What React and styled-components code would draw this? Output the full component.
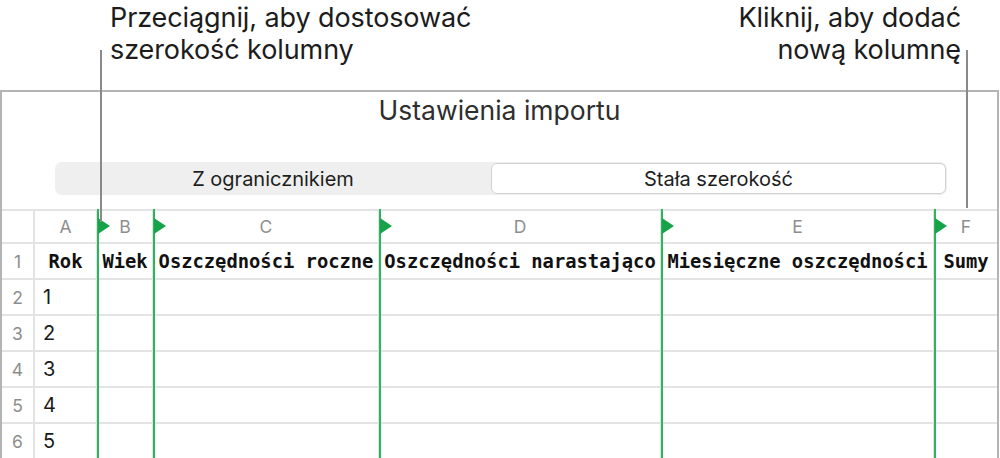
import React from 'react';
import styled, { createGlobalStyle } from 'styled-components';

const GlobalStyle = createGlobalStyle`
  body {
    margin: 0;
    background: #ffffff;
    font-family: Inter, "Noto Sans", sans-serif;
  }
`;

const COLUMNS = [
  { letter: '', width: 33 },
  { letter: 'A', width: 63 },
  { letter: 'B', width: 56, marked: true },
  { letter: 'C', width: 226, marked: true },
  { letter: 'D', width: 282, marked: true },
  { letter: 'E', width: 273, marked: true },
  { letter: 'F', width: 62, marked: true },
];

const HEADINGS = ['Rok', 'Wiek', 'Oszczędności roczne', 'Oszczędności narastająco', 'Miesięczne oszczędności', 'Sumy'];
const YEARS = ['1', '2', '3', '4', '5'];

const template = COLUMNS.map((c) => `${c.width}px`).join(' ');

const Page = styled.div`
  position: relative;
  width: 1000px;
  height: 458px;
  overflow: hidden;
`;

const Callouts = styled.div`
  display: flex;
  justify-content: space-between;
  height: 90px;
  padding: 2px 39px 0 110px;
  box-sizing: border-box;
`;

const Callout = styled.div`
  font-size: 27px;
  line-height: 32px;
  color: #1c1c1c;
  text-align: ${(p) => (p.$right ? 'right' : 'left')};
  letter-spacing: -0.1px;
`;

const Leader = styled.div`
  position: absolute;
  left: ${(p) => p.$x}px;
  top: 50px;
  height: ${(p) => p.$h}px;
  width: 2px;
  background: #8a8a8a;
  z-index: 3;
`;

const Panel = styled.div`
  width: 999px;
  box-sizing: border-box;
  border: 2px solid #b4b4b4;
  border-bottom: none;
  height: 368px;
`;

const Title = styled.div`
  text-align: center;
  font-size: 26.5px;
  line-height: 32px;
  color: #2e2e2e;
  padding-top: 2px;
`;

const Segmented = styled.div`
  display: grid;
  grid-template-columns: 436px 1fr;
  margin: 36px 0 0 53px;
  width: 892px;
  height: 33px;
  box-sizing: border-box;
  background: #efefef;
  border-radius: 7px;
  padding: 1px 1px 1px 0;
`;

const Segment = styled.div`
  display: flex;
  align-items: center;
  justify-content: center;
  font-size: 20px;
  color: #1e1e1e;
  border-radius: 6px;
  background: ${(p) => (p.$active ? '#ffffff' : 'transparent')};
  border: 1px solid ${(p) => (p.$active ? '#d2d2d2' : 'transparent')};
`;

const Grid = styled.div`
  position: relative;
  margin-top: 14px;
  border-top: 2px solid #e3e3e3;
`;

const Row = styled.div`
  display: grid;
  grid-template-columns: ${template};
  height: ${(p) => (p.$header ? 31 : 34)}px;
  border-bottom: 2px solid #e3e3e3;
`;

const Cell = styled.div`
  display: flex;
  align-items: center;
  justify-content: ${(p) => (p.$left ? 'flex-start' : 'center')};
  padding-left: ${(p) => (p.$left ? 8 : 0)}px;
  border-right: 2px solid #e3e3e3;
  white-space: nowrap;
  overflow: visible;
  &:last-child {
    border-right: none;
  }
`;

const Letter = styled(Cell)`
  font-size: 17.5px;
  color: #8e8e8e;
`;

const Heading = styled(Cell)`
  font-family: "DejaVu Sans Mono", "Liberation Mono", monospace;
  font-weight: bold;
  font-size: 18.8px;
  color: #111111;
`;

const Value = styled(Cell)`
  font-size: 20px;
  color: #1a1a1a;
`;

const Marker = styled.div`
  position: absolute;
  top: -2px;
  bottom: -260px;
  width: 2px;
  background: #2bb55e;
  z-index: 2;
  &::after {
    content: '';
    position: absolute;
    left: 1px;
    top: 9px;
    border-left: 12px solid #17a34a;
    border-top: 8.5px solid transparent;
    border-bottom: 8.5px solid transparent;
  }
`;

const markerOffsets = COLUMNS.reduce((acc, col, i) => {
  const start = COLUMNS.slice(0, i).reduce((s, c) => s + c.width, 0);
  if (col.marked) acc.push(start - 1);
  return acc;
}, []);

export default function App() {
  return (
    <Page>
      <GlobalStyle />
      <Callouts>
        <Callout>
          Przeciągnij, aby dostosować
          <br />
          szerokość kolumny
        </Callout>
        <Callout $right>
          Kliknij, aby dodać
          <br />
          nową kolumnę
        </Callout>
      </Callouts>
      <Leader $x={100} $h={172} />
      <Leader $x={966} $h={158} />
      <Panel>
        <Title>Ustawienia importu</Title>
        <Segmented>
          <Segment>Z ogranicznikiem</Segment>
          <Segment $active>Stała szerokość</Segment>
        </Segmented>
        <Grid>
          {markerOffsets.map((x) => (
            <Marker key={x} style={{ left: x }} />
          ))}
          <Row $header>
            {COLUMNS.map((c, i) => (
              <Letter key={i}>{c.letter}</Letter>
            ))}
          </Row>
          <Row>
            <Letter>1</Letter>
            {HEADINGS.map((h) => (
              <Heading key={h}>{h}</Heading>
            ))}
          </Row>
          {YEARS.map((y, r) => (
            <Row key={y}>
              <Letter>{r + 2}</Letter>
              <Value $left>{y}</Value>
              {HEADINGS.slice(1).map((h) => (
                <Value key={h} />
              ))}
            </Row>
          ))}
        </Grid>
      </Panel>
    </Page>
  );
}
